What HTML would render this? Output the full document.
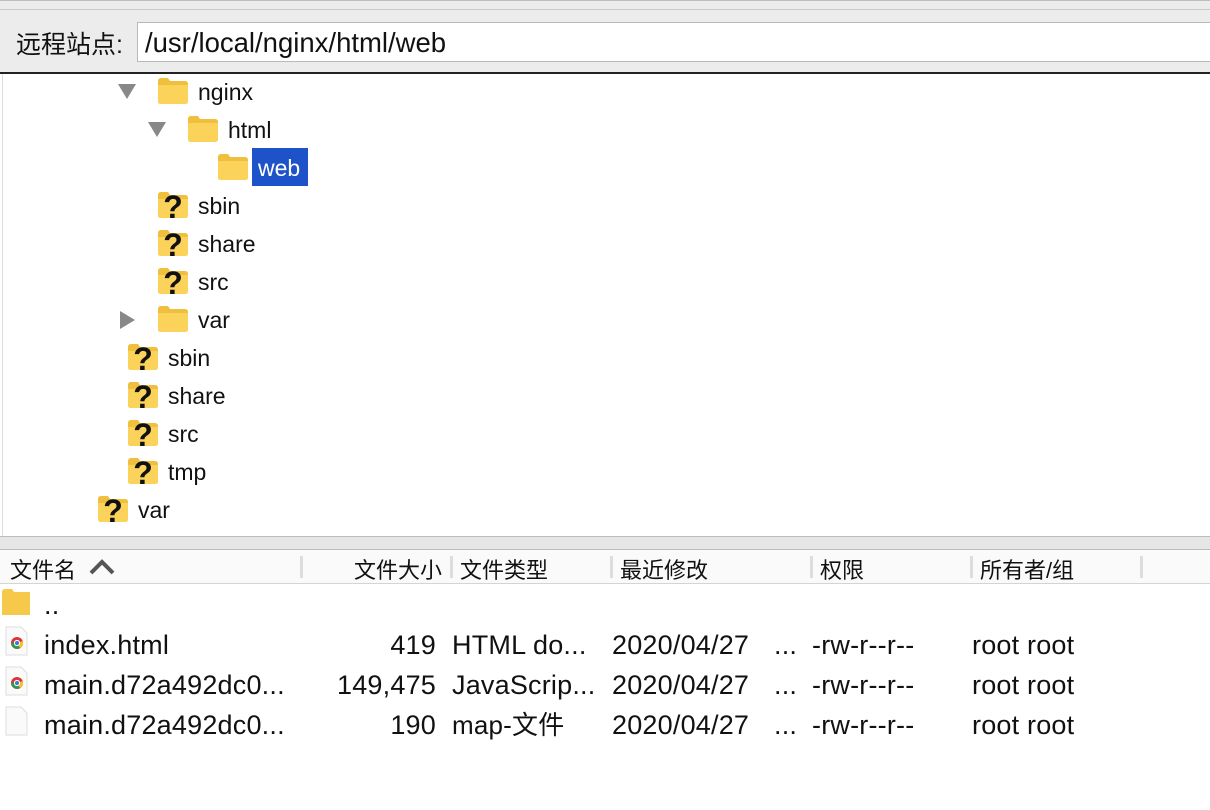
<!DOCTYPE html>
<html><head><meta charset="utf-8"><style>
*{margin:0;padding:0;box-sizing:border-box}
body{width:1210px;height:810px;overflow:hidden;background:#fff;font-family:"Liberation Sans","Noto Sans CJK SC",sans-serif;color:#111;position:relative}
.abs{position:absolute;white-space:nowrap}
.top{position:absolute;left:0;top:0;width:1210px;height:74px;background:#ececec;border-top:1px solid #bdbdbd}
.top:before{content:"";position:absolute;left:0;top:8px;width:100%;height:1px;background:#c8c8c8}
.inp{position:absolute;left:137px;top:22px;width:1080px;height:40px;background:#fff;border:1px solid #b9b9b9;font-size:27.5px;line-height:40px;padding-left:7px}
.dark{position:absolute;left:0;top:72px;width:1210px;height:2px;background:#222}
.tree{position:absolute;left:2px;top:74px;width:1208px;height:463px;background:#fff;border-left:1px solid #ddd}
.t{font-size:23px;line-height:26px}
.sep{position:absolute;left:0;top:536px;width:1210px;height:14px;background:#e6e6e6;border-top:1px solid #bbb;border-bottom:1px solid #bbb}
.hdr{position:absolute;left:0;top:550px;width:1210px;height:34px;background:#fafafa;border-bottom:1px solid #d4d4d4}
.h{font-size:22px;top:556px;line-height:30px}
.cs{position:absolute;top:556px;width:3px;height:22px;background:#ddd}
.r{font-size:27px;line-height:30px;letter-spacing:0.2px}
</style></head><body>
<div class="top"></div>
<div class="abs" style="left:16px;top:28px;font-size:25px;line-height:34px">远程站点:</div>
<div class="inp">/usr/local/nginx/html/web</div>
<div class="dark"></div>
<div class="tree"></div>
<svg class="abs" style="left:0;top:0" width="1210" height="540">
<defs>
<g id="f"><path d="M0 3 Q0 0 3 0 H10 L12 3 H27 Q30 3 30 6 V23 Q30 26 27 26 H3 Q0 26 0 23Z" fill="#f0bf3e"/><path d="M0 7 H30 V23 Q30 26 27 26 H3 Q0 26 0 23Z" fill="#fbd25a"/></g>
<g id="q"><use href="#f"/><text x="15" y="26" font-family="Liberation Sans" font-weight="bold" font-size="32" text-anchor="middle" fill="#111">?</text></g>
</defs>
<path d="M118 84 H136 L127 99Z" fill="#888"/>
<use href="#f" x="158" y="78"/>
<path d="M148 122 H166 L157 137Z" fill="#888"/>
<use href="#f" x="188" y="116"/>
<use href="#f" x="218" y="154"/>
<rect x="252" y="148" width="56" height="38" fill="#1d52c9"/>
<use href="#q" x="158" y="192"/>
<use href="#q" x="158" y="230"/>
<use href="#q" x="158" y="268"/>
<path d="M120 311 V329 L135 320Z" fill="#888"/>
<use href="#f" x="158" y="306"/>
<use href="#q" x="128" y="344"/>
<use href="#q" x="128" y="382"/>
<use href="#q" x="128" y="420"/>
<use href="#q" x="128" y="458"/>
<use href="#q" x="98" y="496"/>
</svg>
<div class="abs t" style="left:198px;top:79px">nginx</div>
<div class="abs t" style="left:228px;top:117px">html</div>
<div class="abs t" style="left:258px;top:155px;color:#fff">web</div>
<div class="abs t" style="left:198px;top:193px">sbin</div>
<div class="abs t" style="left:198px;top:231px">share</div>
<div class="abs t" style="left:198px;top:269px">src</div>
<div class="abs t" style="left:198px;top:307px">var</div>
<div class="abs t" style="left:168px;top:345px">sbin</div>
<div class="abs t" style="left:168px;top:383px">share</div>
<div class="abs t" style="left:168px;top:421px">src</div>
<div class="abs t" style="left:168px;top:459px">tmp</div>
<div class="abs t" style="left:138px;top:497px">var</div>
<div class="sep"></div>
<div class="hdr"></div>
<div class="abs h" style="left:10px">文件名</div>
<svg class="abs" style="left:88px;top:558px" width="30" height="20"><path d="M3 15 L14 4 L25 15" fill="none" stroke="#555" stroke-width="4"/></svg>
<div class="cs" style="left:300px"></div>
<div class="abs h" style="left:354px">文件大小</div>
<div class="cs" style="left:450px"></div>
<div class="abs h" style="left:460px">文件类型</div>
<div class="cs" style="left:610px"></div>
<div class="abs h" style="left:620px">最近修改</div>
<div class="cs" style="left:810px"></div>
<div class="abs h" style="left:820px">权限</div>
<div class="cs" style="left:970px"></div>
<div class="abs h" style="left:980px">所有者/组</div>
<div class="cs" style="left:1140px"></div>
<svg class="abs" style="left:0;top:585px" width="40" height="160">
<path d="M2 7 Q2 4 5 4 H12 L14 7 H30 V30 H2Z" fill="#f7c94b"/>
<g transform="translate(6,42)"><path d="M0 0 H15 L21 6 V28 H0Z" fill="#fafafa" stroke="#ddd"/><circle cx="11" cy="16" r="6" fill="#d33"/><path d="M11 16 L5 16 A6 6 0 0 0 14 21Z" fill="#2a9d4b"/><path d="M11 16 L14 21 A6 6 0 0 0 17 14Z" fill="#f5c02c"/><circle cx="11" cy="16" r="2.6" fill="#3b7be0" stroke="#fff"/></g>
<g transform="translate(6,82)"><path d="M0 0 H15 L21 6 V28 H0Z" fill="#fafafa" stroke="#ddd"/><circle cx="11" cy="16" r="6" fill="#d33"/><path d="M11 16 L5 16 A6 6 0 0 0 14 21Z" fill="#2a9d4b"/><path d="M11 16 L14 21 A6 6 0 0 0 17 14Z" fill="#f5c02c"/><circle cx="11" cy="16" r="2.6" fill="#3b7be0" stroke="#fff"/></g>
<g transform="translate(6,122)"><path d="M0 0 H15 L21 6 V28 H0Z" fill="#fafafa" stroke="#ddd"/></g>
</svg>
<div class="abs r" style="left:44px;top:590px">..</div>
<div class="abs r" style="left:44px;top:630px">index.html</div>
<div class="abs r" style="left:44px;top:670px">main.d72a492dc0...</div>
<div class="abs r" style="left:44px;top:710px">main.d72a492dc0...</div>
<div class="abs r" style="right:774px;top:630px">419</div>
<div class="abs r" style="right:774px;top:670px">149,475</div>
<div class="abs r" style="right:774px;top:710px">190</div>
<div class="abs r" style="left:452px;top:630px">HTML do...</div>
<div class="abs r" style="left:452px;top:670px">JavaScrip...</div>
<div class="abs r" style="left:452px;top:710px;font-size:26px">map-文件</div>
<div class="abs r" style="left:612px;top:630px">2020/04/27</div>
<div class="abs r" style="left:612px;top:670px">2020/04/27</div>
<div class="abs r" style="left:612px;top:710px">2020/04/27</div>
<div class="abs r" style="left:774px;top:630px">...</div>
<div class="abs r" style="left:774px;top:670px">...</div>
<div class="abs r" style="left:774px;top:710px">...</div>
<div class="abs r" style="left:812px;top:630px">-rw-r--r--</div>
<div class="abs r" style="left:812px;top:670px">-rw-r--r--</div>
<div class="abs r" style="left:812px;top:710px">-rw-r--r--</div>
<div class="abs r" style="left:972px;top:630px">root root</div>
<div class="abs r" style="left:972px;top:670px">root root</div>
<div class="abs r" style="left:972px;top:710px">root root</div>
</body></html>
